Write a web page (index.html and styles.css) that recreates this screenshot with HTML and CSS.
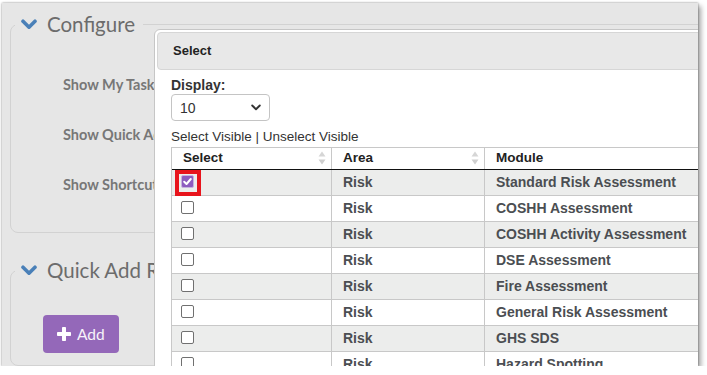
FILE: index.html
```html
<!DOCTYPE html>
<html>
<head>
<meta charset="utf-8">
<link rel="stylesheet" href="styles.css">
</head>
<body>
<div class="frame">
  <fieldset class="group group-config">
    <legend><span class="legend-inner"><svg class="chev" width="16" height="11" viewBox="0 0 16 11"><path d="M2 2.2 L8 8.2 L14 2.2" fill="none" stroke="#4a80b8" stroke-width="3.6" stroke-linecap="round" stroke-linejoin="round"/></svg>Configure</span></legend>
    <div class="opts">
      <div class="opt">Show My Tasks</div>
      <div class="opt">Show Quick Add</div>
      <div class="opt">Show Shortcuts</div>
    </div>
  </fieldset>
  <fieldset class="group group-quick">
    <legend><span class="legend-inner"><svg class="chev" width="16" height="11" viewBox="0 0 16 11"><path d="M2 2.2 L8 8.2 L14 2.2" fill="none" stroke="#4a80b8" stroke-width="3.6" stroke-linecap="round" stroke-linejoin="round"/></svg>Quick Add Records</span></legend>
    <div class="quick-body">
      <button class="btn-add"><svg class="plus" width="14" height="14" viewBox="0 0 14 14"><rect x="5" y="0" width="4" height="14" rx="0.8" fill="#fff"/><rect x="0" y="5" width="14" height="4" rx="0.8" fill="#fff"/></svg>Add</button>
    </div>
  </fieldset>

  <div class="modal">
    <div class="modal-head">Select</div>
    <div class="modal-body">
      <div class="lbl">Display:</div>
      <div class="select"><span>10</span><svg width="10" height="7" viewBox="0 0 10 7"><path d="M1.2 1.5 L5 5.2 L8.8 1.5" fill="none" stroke="#333" stroke-width="1.9" stroke-linecap="round" stroke-linejoin="round"/></svg></div>
      <div class="links">Select Visible | Unselect Visible</div>
      <div class="grid">
        <div class="row head">
          <div class="c"><span>Select</span><svg class="sort" width="8" height="14" viewBox="0 0 8 14"><path d="M4 0.5 L7.5 5.5 L0.5 5.5 Z" fill="#d6d6d6"/><path d="M4 13.5 L7.5 8.5 L0.5 8.5 Z" fill="#cfcfcf"/></svg></div>
          <div class="c"><span>Area</span><svg class="sort" width="8" height="14" viewBox="0 0 8 14"><path d="M4 0.5 L7.5 5.5 L0.5 5.5 Z" fill="#d6d6d6"/><path d="M4 13.5 L7.5 8.5 L0.5 8.5 Z" fill="#cfcfcf"/></svg></div>
          <div class="c"><span>Module</span></div>
        </div>
        <div class="row odd">
          <div class="c cb-cell"><span class="cb checked"><svg width="11" height="11" viewBox="0 0 11 11"><path d="M2.2 5.8 L4.5 8 L8.8 3" fill="none" stroke="#fff" stroke-width="2" stroke-linecap="round" stroke-linejoin="round"/></svg><span class="highlight"></span></span></div>
          <div class="c">Risk</div>
          <div class="c">Standard Risk Assessment</div>
        </div>
        <div class="row">
          <div class="c cb-cell"><span class="cb"></span></div>
          <div class="c">Risk</div>
          <div class="c">COSHH Assessment</div>
        </div>
        <div class="row odd">
          <div class="c cb-cell"><span class="cb"></span></div>
          <div class="c">Risk</div>
          <div class="c">COSHH Activity Assessment</div>
        </div>
        <div class="row">
          <div class="c cb-cell"><span class="cb"></span></div>
          <div class="c">Risk</div>
          <div class="c">DSE Assessment</div>
        </div>
        <div class="row odd">
          <div class="c cb-cell"><span class="cb"></span></div>
          <div class="c">Risk</div>
          <div class="c">Fire Assessment</div>
        </div>
        <div class="row">
          <div class="c cb-cell"><span class="cb"></span></div>
          <div class="c">Risk</div>
          <div class="c">General Risk Assessment</div>
        </div>
        <div class="row odd">
          <div class="c cb-cell"><span class="cb"></span></div>
          <div class="c">Risk</div>
          <div class="c">GHS SDS</div>
        </div>
        <div class="row">
          <div class="c cb-cell"><span class="cb"></span></div>
          <div class="c">Risk</div>
          <div class="c">Hazard Spotting</div>
        </div>
      </div>
    </div>
  </div>
</div>
</body>
</html>
```

FILE: styles.css
```css
html, body {
  margin: 0;
  padding: 0;
  background: #ffffff;
}

.frame {
  position: relative;
  margin: 3px 0 0 2px;
  width: 696px;
  height: 363px;
  overflow: hidden;
  background: #e6e6e6;
  box-shadow: 0 0 2px rgba(0, 0, 0, 0.45), 3px 3px 5px rgba(0, 0, 0, 0.35);
  font-family: Lato, "Open Sans", sans-serif;
}

.group {
  margin: 0 0 0 8px;
  padding: 0;
  width: 760px;
  border: 1px solid #d2d2d2;
  border-radius: 8px;
  min-width: 0;
  box-sizing: content-box;
}

.group-config {
  margin-top: 9px;
}

.group-quick {
  margin-top: 25px;
}

.group legend {
  margin-left: 4px;
  padding: 0 8px 0 6px;
  line-height: 24px;
  height: 24px;
}

.legend-inner {
  display: inline-flex;
  align-items: center;
  gap: 10px;
  font-size: 20.5px;
  color: #6c6c6c;
  white-space: nowrap;
}

.chev {
  display: block;
  margin-top: 1px;
}

.opts {
  padding: 24px 0 22px 52px;
}

.opt {
  height: 50px;
  line-height: 50px;
  font-size: 14.5px;
  font-weight: 700;
  color: #777777;
  white-space: nowrap;
}

.quick-body {
  padding: 33px 0 12px 32px;
}

.btn-add {
  display: flex;
  align-items: center;
  gap: 6px;
  width: 76px;
  height: 38px;
  padding: 0 0 0 14px;
  border: 0;
  border-radius: 4px;
  background: #9468b9;
  color: #f7f3fa;
  font-family: Lato, "Open Sans", sans-serif;
  font-size: 15.5px;
  box-sizing: border-box;
}

.plus {
  display: block;
}

.modal {
  position: absolute;
  left: 152px;
  top: 26px;
  width: 600px;
  height: 400px;
  border: 1px solid #c6c6c6;
  border-radius: 6px;
  padding: 2px;
  background: #ffffff;
  font-family: "Liberation Sans", Arial, sans-serif;
}

.modal-head {
  height: 38px;
  box-sizing: border-box;
  border: 1px solid #d6d6d6;
  border-radius: 4px;
  background: #e8e8e8;
  padding-left: 15px;
  line-height: 35px;
  font-size: 13px;
  font-weight: 700;
  color: #222222;
}

.modal-body {
  padding: 7px 0 0 14px;
}

.lbl {
  line-height: 17px;
  font-size: 14px;
  font-weight: 700;
  color: #333333;
}

.select {
  width: 99px;
  height: 27px;
  box-sizing: border-box;
  border: 1px solid #c4c4c4;
  border-radius: 4px;
  display: flex;
  align-items: center;
  justify-content: space-between;
  padding: 0 8px 0 8px;
  font-size: 14px;
  color: #333333;
}

.links {
  margin-top: 6px;
  line-height: 20px;
  font-size: 13.5px;
  color: #333333;
}

.grid {
  border-left: 1px solid #c8c8c8;
  border-top: 1px solid #c8c8c8;
}

.row {
  display: grid;
  grid-template-columns: 159px 153px 320px;
  height: 25px;
  border-bottom: 1px solid #c8c8c8;
  font-size: 14px;
  font-weight: 700;
  color: #4b4e52;
  line-height: 16px;
}

.row.odd {
  background: #ecedec;
}

.row.head {
  height: 21px;
  border-bottom: 1px solid #111111;
  font-size: 13.5px;
  color: #222222;
  background: #ffffff;
}

.c {
  padding: 0 0 2px 11px;
  display: flex;
  align-items: center;
  white-space: nowrap;
}

.c + .c {
  border-left: 1px solid #c8c8c8;
}

.head .c {
  justify-content: space-between;
  padding: 0 5px 2px 11px;
}

.sort {
  display: block;
}

.cb-cell {
  padding-left: 9px;
}

.cb {
  position: relative;
  display: block;
  width: 13px;
  height: 13px;
  box-sizing: border-box;
  border: 1px solid #707070;
  border-radius: 2px;
  background: #ffffff;
}

.cb.checked {
  background: #8d5bbf;
  border-color: #c7b2de;
}

.cb svg {
  display: block;
  position: absolute;
  left: 0;
  top: 0;
}

.highlight {
  position: absolute;
  left: -7px;
  top: -6px;
  width: 26px;
  height: 26px;
  box-sizing: border-box;
  border: 4px solid #e8141c;
}
```
